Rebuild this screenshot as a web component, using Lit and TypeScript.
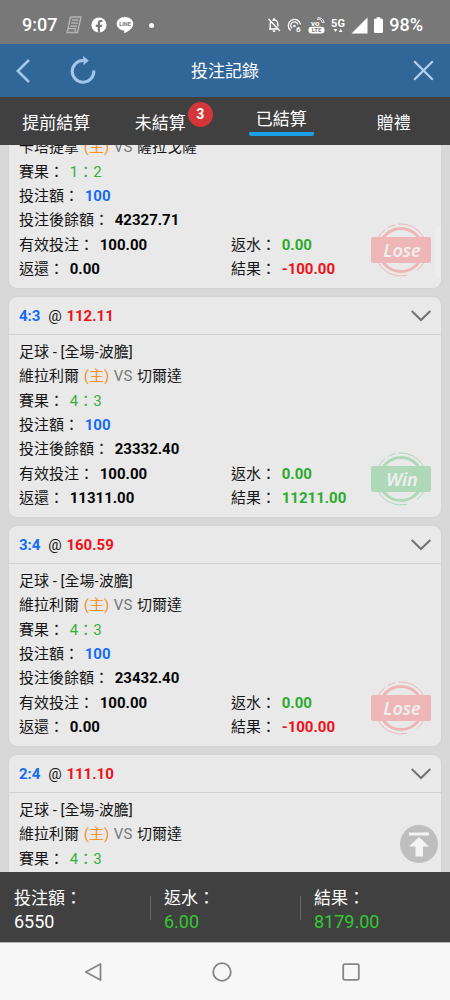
import { LitElement, html, css, svg, nothing } from "lit";
import { customElement, property, query } from "lit/decorators.js";
import { classMap } from "lit/directives/class-map.js";

interface Bet {
  pick?: string;
  odds?: string;
  league?: string;
  home: string;
  away: string;
  score: string;
  stake?: string;
  balance?: string;
  valid?: string;
  rebate?: string;
  returned?: string;
  result?: string;
}

const LEAGUE = "足球 - [全場-波膽]";

const BETS: Bet[] = [
  { home: "卡塔捷拿", away: "薩拉戈薩", score: "1：2", stake: "100", balance: "42327.71", valid: "100.00", rebate: "0.00", returned: "0.00", result: "-100.00" },
  { pick: "4:3", odds: "112.11", league: LEAGUE, home: "維拉利爾", away: "切爾達", score: "4：3", stake: "100", balance: "23332.40", valid: "100.00", rebate: "0.00", returned: "11311.00", result: "11211.00" },
  { pick: "3:4", odds: "160.59", league: LEAGUE, home: "維拉利爾", away: "切爾達", score: "4：3", stake: "100", balance: "23432.40", valid: "100.00", rebate: "0.00", returned: "0.00", result: "-100.00" },
  { pick: "2:4", odds: "111.10", league: LEAGUE, home: "維拉利爾", away: "切爾達", score: "4：3" },
];

const reset = css`
  * { box-sizing: border-box; }
  svg { display: block; flex: none; }
  button {
    appearance: none; border: 0; margin: 0; padding: 0; background: none;
    font: inherit; color: inherit; cursor: pointer;
  }
`;

@customElement("status-bar")
class StatusBar extends LitElement {
  static styles = [reset, css`
    :host {
      display: flex; justify-content: space-between; align-items: center;
      height: 44px; padding: 6px 27px 0 22px; background: #787878; color: #fff;
    }
    .group { display: flex; align-items: center; }
    .left { gap: 9px; }
    .right { gap: 6px; }
    .clock { font-size: 18px; line-height: 20px; font-weight: 500; }
    .dot { width: 5px; height: 5px; margin-left: 6px; border-radius: 50%; background: #fff; }
    .tiny { font-family: Roboto, sans-serif; font-weight: 700; }
  `];

  render() {
    return html`
      <div class="group left">
        <span class="clock">9:07</span>
        <svg width="16" height="18" viewBox="0 0 16 18" fill="none" stroke="#b4b4b4" stroke-width="1.4">
          <path d="M4.5 1H15L11.5 16.5H1L2 12.5" /><path d="M4.5 1L2 12.5H9.5L9 16.5" />
          <path d="M6 4H12.5M5.3 7H12M4.6 10H11.2" />
        </svg>
        <svg width="16" height="16" viewBox="0 0 16 16">
          <circle cx="8" cy="8" r="7.6" fill="#fff" />
          <path d="M6.8 15.6V10H4.8V7.7H6.8V6.2C6.8 4.1 8 3 9.9 3C10.7 3 11.4 3.1 11.4 3.1V5H10.3C9.3 5 9 5.6 9 6.3V7.7H11.3L10.9 10H9V15.6Z" fill="#787878" />
        </svg>
        <svg width="18" height="18" viewBox="0 0 18 18">
          <path d="M9 1C4.3 1 .7 4 .7 7.8C.7 11.2 3.6 14 7.6 14.5C8.6 14.7 8.3 15.4 8.2 16.8C8.2 17.2 8.5 17.3 8.9 17.1C11.5 15.8 17.3 12.4 17.3 7.8C17.3 4 13.7 1 9 1Z" fill="#fff" />
          <text class="tiny" x="9" y="10" font-size="5.5" text-anchor="middle" fill="#787878">LINE</text>
        </svg>
        <span class="dot"></span>
      </div>
      <div class="group right">
        <svg width="14" height="16" viewBox="0 0 14 16" fill="none" stroke="#fff" stroke-width="1.4">
          <path d="M1.5 2L13 14M2 12H11M3.2 11.5V7C3.2 6 3.5 5.2 4 4.6M5.5 3.5C8.5 2.2 10.9 4.2 10.9 7V9.5" />
          <path d="M7 1.2V3M5.8 14.2H8.2" stroke-width="1.8" />
        </svg>
        <svg width="15" height="15" viewBox="0 0 15 15" fill="none" stroke="#fff" stroke-width="1.3">
          <path d="M3.6 12.4A6.2 6.2 0 1 1 13.6 6.5" /><path d="M5 10.3A3.7 3.7 0 1 1 11 6.5" />
          <circle cx="7.4" cy="8" r="1.2" fill="#fff" stroke="none" />
          <text class="tiny" x="9" y="14" font-size="8" fill="#fff" stroke="none">6</text>
        </svg>
        <svg width="17" height="17" viewBox="0 0 17 17">
          <text class="tiny" x="3" y="8.5" font-size="8" fill="#fff">vo</text>
          <path d="M9 2.5C11.5 1.5 14 3 14.3 6M9.5 .8C13 .2 16 2.6 16 6" fill="none" stroke="#fff" stroke-width="1" />
          <rect x=".5" y="9.8" width="16" height="6.6" rx="3" fill="#fff" />
          <text class="tiny" x="8.5" y="15.4" font-size="6" text-anchor="middle" fill="#787878">LTE</text>
        </svg>
        <svg width="14" height="17" viewBox="0 0 14 17">
          <text class="tiny" x="7" y="9.6" font-size="11" text-anchor="middle" fill="#fff">5G</text>
          <path d="M2.6 12H6.4L4.5 15ZM7.8 15H11.6L9.7 12Z" fill="#fff" />
        </svg>
        <svg width="17" height="17" viewBox="0 0 17 17"><path d="M.5 16.5L16.5 .5V16.5Z" fill="#fff" /></svg>
        <svg width="9" height="16" viewBox="0 0 9 16"><path d="M1 1.8H2.6V.3H6.4V1.8H8Q9 1.8 9 2.8V15Q9 16 8 16H1Q0 16 0 15V2.8Q0 1.8 1 1.8Z" fill="#fff" /></svg>
        <span class="clock">98%</span>
      </div>
    `;
  }
}

@customElement("result-stamp")
class ResultStamp extends LitElement {
  @property({ type: Boolean }) win = false;

  static styles = [reset, css`
    :host { display: block; }
    .word { font-family: "Noto Sans", "Open Sans", sans-serif; font-weight: 600; font-style: italic; }
  `];

  render() {
    const tone = this.win ? "#afd8b9" : "#efb6b7";
    return html`
      <svg width="60" height="54" viewBox="0 0 60 54" role="img" aria-label=${this.win ? "Win" : "Lose"}>
        ${svg`
          <g fill="none" stroke=${tone}>
            <circle cx="30" cy="27" r="21.5" stroke-width="3" />
            <path d="M7 15A26 26 0 0 1 14 6.5M17 4.5A26 26 0 0 1 24 1.7M27.5 1A26 26 0 0 1 53 15" stroke-width="1" />
            <path d="M7 39A26 26 0 0 0 36 52.4M46 47.5A26 26 0 0 0 53 39" stroke-width="1" />
          </g>
          <rect x="0" y="14" width="60" height="26" rx="2" fill=${tone} />
          <text class="word" x="31" y="34" font-size="18" text-anchor="middle" fill="#f0efef">${this.win ? "Win" : "Lose"}</text>
        `}
      </svg>
    `;
  }
}

@customElement("bet-card")
class BetCard extends LitElement {
  @property({ attribute: false }) bet!: Bet;

  static styles = [reset, css`
    :host {
      display: block; position: relative; border-radius: 8px; background: #e9e9e9;
      box-shadow: 0 0 2px #c8c8c8; font-size: 15px; line-height: 24px; color: #161616;
    }
    .head {
      display: flex; justify-content: space-between; align-items: center;
      height: 38px; padding: 0 10px; border-bottom: 1px solid #d2d2d2;
    }
    .pick { margin-right: 4px; }
    .odds { margin-left: 1px; }
    .body { display: grid; gap: 1px; padding: 5px 10px 7px; }
    .body b, .score { margin-left: 2px; }
    .columns { display: grid; grid-template-columns: 1fr 1fr; column-gap: 12px; }
    b { font-weight: 700; }
    .value { color: #060606; }
    .blue { color: #146cf5; }
    .red { color: #f01018; }
    .green { color: #2bab2b; }
    .host { margin: 0 1px; color: #fa9128; }
    .versus { margin-right: 1px; color: #777; }
    .score { color: #3aae3a; }
    .stamp { position: absolute; right: 10px; bottom: 11px; }
  `];

  render() {
    const b = this.bet;
    const lost = b.result?.startsWith("-") ?? false;
    return html`
      ${b.pick ? html`
        <div class="head">
          <div><b class="blue pick">${b.pick}</b> @ <b class="red odds">${b.odds}</b></div>
          <button aria-label="展開">
            <svg width="20" height="12" viewBox="0 0 20 12" fill="none" stroke="#727272" stroke-width="2"><path d="M.7 1L10 10L19.3 1" /></svg>
          </button>
        </div>` : nothing}
      <div class="body">
        <div>
          ${b.league ? html`<div>${b.league}</div>` : nothing}
          <div>${b.home} <span class="host">(主)</span> <span class="versus">VS</span> ${b.away}</div>
        </div>
        <div>
          <div>賽果： <span class="score">${b.score}</span></div>
          ${b.stake ? html`<div>投注額： <b class="blue">${b.stake}</b></div>` : nothing}
          ${b.balance ? html`<div>投注後餘額： <b class="value">${b.balance}</b></div>` : nothing}
        </div>
        ${b.result ? html`
          <div class="columns">
            <div>有效投注： <b class="value">${b.valid}</b></div>
            <div>返水： <b class="green">${b.rebate}</b></div>
            <div>返還： <b class="value">${b.returned}</b></div>
            <div>結果： <b class=${lost ? "red" : "green"}>${b.result}</b></div>
          </div>` : nothing}
      </div>
      ${b.result ? html`<result-stamp class="stamp" ?win=${!lost}></result-stamp>` : nothing}
    `;
  }
}

@customElement("app-root")
class AppRoot extends LitElement {
  @query(".list") private list!: HTMLElement;

  static styles = [reset, css`
    :host {
      display: flex; flex-direction: column; height: 100vh; overflow: hidden;
      font-family: Roboto, "Noto Sans CJK TC", sans-serif; background: #d8d8d8; color: #fff;
    }
    .header {
      flex: none; display: grid; grid-template-columns: 1fr auto 1fr; align-items: center;
      height: 53px; padding: 0 16px; background: #316698;
    }
    .actions { display: flex; align-items: center; gap: 40px; }
    .close { justify-self: end; }
    .title { margin: 0; font-size: 17px; line-height: 24px; font-weight: 400; }
    .tabs {
      flex: none; display: grid; grid-template-columns: repeat(4, 1fr);
      height: 48px; background: #404040; font-size: 17px; line-height: 24px;
    }
    .tab { display: flex; justify-content: center; align-items: center; padding-top: 3px; }
    .tab.counted { padding-right: 17px; }
    .label { position: relative; padding: 0 7px; }
    .tab.active { padding-top: 0; }
    .active .label { padding-bottom: 1px; border-bottom: 4px solid #1b9fe6; border-radius: 2px; }
    .badge {
      position: absolute; left: 100%; top: -9px; margin-left: -5px; width: 25px; height: 25px; border-radius: 50%;
      background: #d4363a; font-size: 14px; line-height: 25px; font-weight: 700; text-align: center;
    }
    .main { position: relative; flex: 1; min-height: 0; }
    .list {
      display: flex; flex-direction: column; gap: 9px; height: 100%; padding: 9px;
      overflow-y: auto; scrollbar-width: none;
    }
    .list > * { flex: none; }
    .handle {
      position: absolute; right: 9px; top: 80px; width: 6px; height: 54px;
      border-radius: 6px 0 0 6px; background: rgba(255, 255, 255, 0.2);
    }
    .top {
      position: absolute; right: 12px; bottom: 9px; width: 38px; height: 38px;
      display: grid; place-items: center; border-radius: 50%; background: #bebebe;
    }
    .totals {
      flex: none; display: grid; grid-template-columns: repeat(3, 1fr);
      margin: 0; padding: 14px 0 8px; background: #404040; line-height: 24px;
    }
    .total { padding-left: 14px; background: linear-gradient(#686868, #686868) 0 10px / 1px 24px no-repeat; }
    .total:first-child { background: none; }
    .total dt { font-size: 17px; }
    .total dd { margin: 0; font-size: 18px; }
    .gain { color: #32c832; }
    .nav {
      flex: none; display: grid; grid-template-columns: repeat(3, 1fr);
      height: 58px; padding: 0 35px 0 29px; background: #f7f7f7; border-top: 1px solid #b4b4b4;
    }
    .nav button { display: grid; place-items: center; }
  `];

  async firstUpdated() {
    await Promise.all([...this.list.querySelectorAll("bet-card")].map((c) => (c as BetCard).updateComplete));
    this.list.scrollTop = 24;
  }

  private tab(label: string, active = false, count = 0) {
    return html`
      <button role="tab" aria-selected=${active} class=${classMap({ tab: true, active, counted: count > 0 })}>
        <span class="label">${label}${count ? html`<span class="badge">${count}</span>` : nothing}</span>
      </button>`;
  }

  private total(label: string, value: string, gain: boolean) {
    return html`<div class="total"><dt>${label}：</dt><dd class=${classMap({ gain })}>${value}</dd></div>`;
  }

  render() {
    return html`
      <status-bar></status-bar>
      <header class="header">
        <div class="actions">
          <button aria-label="返回">
            <svg width="14" height="24" viewBox="0 0 14 24" fill="none" stroke="#a3c6ec" stroke-width="2.6"><path d="M13 1L1.8 12L13 23" /></svg>
          </button>
          <button aria-label="重新整理">
            <svg width="26" height="30" viewBox="0 0 26 30" fill="none" stroke="#a3c6ec" stroke-width="3">
              <path d="M23.8 14.5A10.8 10.8 0 1 1 13.5 4.6" /><path d="M13 0L18.8 4.4L13.6 9.2Z" fill="#a3c6ec" stroke="none" />
            </svg>
          </button>
        </div>
        <h1 class="title">投注記錄</h1>
        <button class="close" aria-label="關閉">
          <svg width="21" height="21" viewBox="0 0 21 21" fill="none" stroke="#b4d2f0" stroke-width="2.2"><path d="M1.2 1.2L19.8 19.8M19.8 1.2L1.2 19.8" /></svg>
        </button>
      </header>
      <div class="tabs" role="tablist">
        ${this.tab("提前結算")}${this.tab("未結算", false, 3)}${this.tab("已結算", true)}${this.tab("贈禮")}
      </div>
      <main class="main">
        <div class="list">${BETS.map((bet) => html`<bet-card .bet=${bet}></bet-card>`)}</div>
        <div class="handle"></div>
        <button class="top" aria-label="回到頂部">
          <svg width="20" height="25" viewBox="0 0 20 25" fill="#f4f4f4"><path d="M0 .5H20V3.5H0ZM10 5L20 14.5H14V24.5H6.5V14.5H0Z" /></svg>
        </button>
      </main>
      <dl class="totals">
        ${this.total("投注額", "6550", false)}${this.total("返水", "6.00", true)}${this.total("結果", "8179.00", true)}
      </dl>
      <nav class="nav">
        <button aria-label="返回鍵"><svg width="18" height="20" viewBox="0 0 18 20" fill="none" stroke="#858585" stroke-width="1.8" stroke-linejoin="round"><path d="M16.5 2V18L1.8 10Z" /></svg></button>
        <button aria-label="主畫面"><svg width="20" height="20" viewBox="0 0 20 20" fill="none" stroke="#858585" stroke-width="1.8"><circle cx="10" cy="10" r="8.8" /></svg></button>
        <button aria-label="最近使用"><svg width="18" height="18" viewBox="0 0 18 18" fill="none" stroke="#858585" stroke-width="1.8"><rect x="1.2" y="1.2" width="15.6" height="15.6" rx="1.5" /></svg></button>
      </nav>
    `;
  }
}
